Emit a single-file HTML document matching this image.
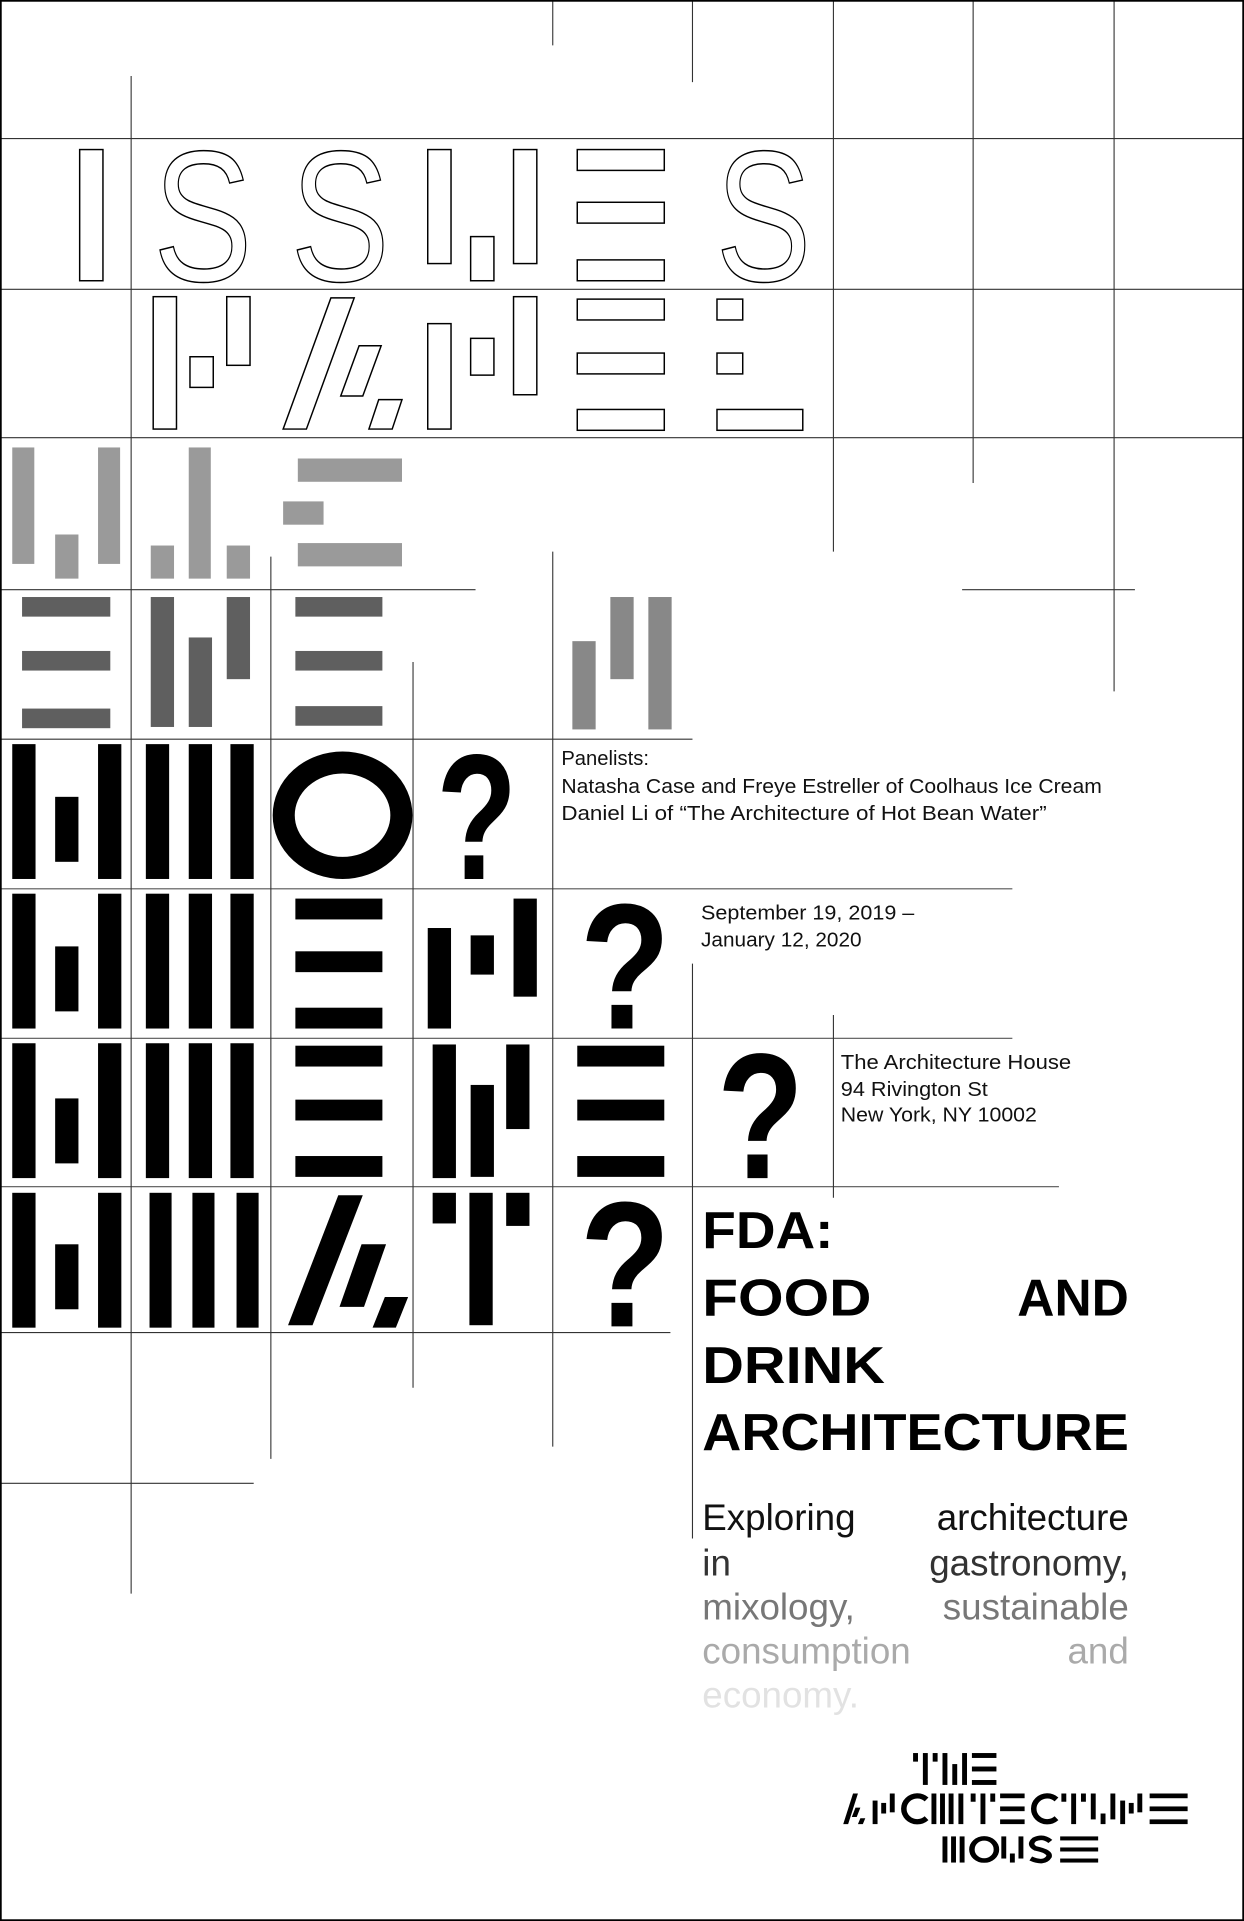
<!DOCTYPE html>
<html><head><meta charset="utf-8"><style>
html,body{margin:0;padding:0;background:#fff;}
svg{display:block;}
text{font-family:"Liberation Sans",sans-serif;}
</style></head><body>
<svg width="1244" height="1921" viewBox="0 0 1015 1567" preserveAspectRatio="none" xmlns="http://www.w3.org/2000/svg">
<rect x="0" y="0" width="1015" height="1567" fill="#fff"/>
<g stroke="#333" stroke-width="0.9" fill="none">
<line x1="0" y1="113" x2="1015" y2="113"/>
<line x1="0" y1="236" x2="1015" y2="236"/>
<line x1="0" y1="357" x2="1015" y2="357"/>
<line x1="0" y1="481" x2="388" y2="481"/>
<line x1="785" y1="481" x2="926" y2="481"/>
<line x1="0" y1="603" x2="565" y2="603"/>
<line x1="0" y1="725" x2="826" y2="725" stroke="#555"/>
<line x1="0" y1="847" x2="826" y2="847" stroke="#555"/>
<line x1="0" y1="968" x2="864" y2="968" stroke="#555"/>
<line x1="0" y1="1087" x2="547" y2="1087"/>
<line x1="0" y1="1210" x2="207" y2="1210"/>
<line x1="107" y1="62" x2="107" y2="1300"/>
<line x1="221" y1="454" x2="221" y2="1190"/>
<line x1="337" y1="540" x2="337" y2="1132"/>
<line x1="451" y1="0" x2="451" y2="37"/>
<line x1="451" y1="450" x2="451" y2="1180"/>
<line x1="565" y1="0" x2="565" y2="67"/>
<line x1="565" y1="786" x2="565" y2="1255"/>
<line x1="680" y1="0" x2="680" y2="450"/>
<line x1="680" y1="828" x2="680" y2="977"/>
<line x1="794" y1="0" x2="794" y2="394"/>
<line x1="909" y1="0" x2="909" y2="564"/>
</g>
<rect x="0.7" y="0.7" width="1013.6" height="1565.6" fill="none" stroke="#000" stroke-width="1.4"/>

<!-- Row 0 outline -->
<g fill="#fff" stroke="#000" stroke-width="1.2">
<rect x="65" y="122" width="19" height="107"/>
<rect x="349" y="122" width="19" height="93"/>
<rect x="384" y="193" width="19" height="36"/>
<rect x="419" y="122" width="19" height="93"/>
<rect x="471" y="122" width="71" height="17"/>
<rect x="471" y="165" width="71" height="17"/>
<rect x="471" y="212" width="71" height="17"/>
<text x="125" y="229" font-size="152" textLength="81" lengthAdjust="spacingAndGlyphs">S</text>
<text x="237" y="229" font-size="152" textLength="81" lengthAdjust="spacingAndGlyphs">S</text>
<text x="584" y="229" font-size="152" textLength="78" lengthAdjust="spacingAndGlyphs">S</text>
<!-- Row 1 -->
<rect x="125" y="242" width="19" height="108"/>
<rect x="155" y="291" width="19" height="25"/>
<rect x="185" y="242" width="19" height="56"/>
<polygon points="231,350 270,243 289,243 250,350"/>
<polygon points="278,323 293,282 311,282 296,323"/>
<polygon points="301,350 309,326 328,326 320,350"/>
<rect x="349" y="264" width="19" height="86"/>
<rect x="384" y="276" width="19" height="30"/>
<rect x="419" y="242" width="19" height="80"/>
<rect x="471" y="244" width="71" height="17"/>
<rect x="471" y="288" width="71" height="17"/>
<rect x="471" y="334" width="71" height="17"/>
<rect x="585" y="244" width="21" height="17"/>
<rect x="585" y="288" width="21" height="17"/>
<rect x="585" y="334" width="70" height="17"/>
</g>

<!-- Row 2 gray -->
<g fill="#9a9a9a">
<rect x="10" y="365" width="18" height="95"/>
<rect x="45" y="436" width="19" height="36"/>
<rect x="80" y="365" width="18" height="95"/>
<rect x="123" y="445" width="19" height="27"/>
<rect x="154" y="365" width="18" height="107"/>
<rect x="185" y="445" width="19" height="27"/>
<rect x="243" y="374" width="85" height="19"/>
<rect x="231" y="409" width="33" height="19"/>
<rect x="243" y="443" width="85" height="19"/>
</g>
<!-- Row 3 -->
<g fill="#5f5f5f">
<rect x="18" y="487" width="72" height="16"/>
<rect x="18" y="531" width="72" height="16"/>
<rect x="18" y="578" width="72" height="16"/>
<rect x="123" y="487" width="19" height="106"/>
<rect x="154" y="520" width="19" height="73"/>
<rect x="185" y="487" width="19" height="67"/>
<rect x="241" y="487" width="71" height="16"/>
<rect x="241" y="531" width="71" height="16"/>
<rect x="241" y="576" width="71" height="16"/>
</g>
<g fill="#888">
<rect x="467" y="523" width="19" height="72"/>
<rect x="498" y="487" width="19" height="67"/>
<rect x="529" y="487" width="19" height="108"/>
</g>

<!-- Rows 4-7 black -->
<g fill="#000">
<rect x="10" y="607" width="19" height="110"/><rect x="45" y="650" width="19" height="53"/><rect x="80" y="607" width="19" height="110"/>
<rect x="119" y="607" width="19" height="110"/><rect x="154" y="607" width="19" height="110"/><rect x="188" y="607" width="19" height="110"/>

<rect x="10" y="729" width="19" height="110"/><rect x="45" y="772" width="19" height="53"/><rect x="80" y="729" width="19" height="110"/>
<rect x="119" y="729" width="19" height="110"/><rect x="154" y="729" width="19" height="110"/><rect x="188" y="729" width="19" height="110"/>
<rect x="241" y="733" width="71" height="17"/><rect x="241" y="776" width="71" height="17"/><rect x="241" y="822" width="71" height="17"/>
<rect x="349" y="757" width="19" height="82"/><rect x="384" y="763" width="19" height="32"/><rect x="419" y="733" width="19" height="80"/>

<rect x="10" y="851" width="19" height="110"/><rect x="45" y="896" width="19" height="53"/><rect x="80" y="851" width="19" height="110"/>
<rect x="119" y="851" width="19" height="110"/><rect x="154" y="851" width="19" height="110"/><rect x="188" y="851" width="19" height="110"/>
<rect x="241" y="853" width="71" height="17"/><rect x="241" y="897" width="71" height="17"/><rect x="241" y="943" width="71" height="17"/>
<rect x="353" y="852" width="19" height="109"/><rect x="384" y="885" width="19" height="75"/><rect x="413" y="852" width="19" height="69"/>
<rect x="471" y="853" width="71" height="17"/><rect x="471" y="897" width="71" height="17"/><rect x="471" y="943" width="71" height="17"/>

<rect x="10" y="973" width="19" height="110"/><rect x="45" y="1015" width="19" height="53"/><rect x="80" y="973" width="19" height="110"/>
<rect x="122" y="973" width="18" height="110"/><rect x="157" y="973" width="18" height="110"/><rect x="193" y="973" width="18" height="110"/>
<polygon points="235,1081 276,975 296,975 255,1081"/>
<polygon points="277,1066 295,1015 315,1015 297,1066"/>
<polygon points="304,1083 314,1058 333,1058 323,1083"/>
<rect x="353" y="973" width="19" height="25"/><rect x="383" y="973" width="19" height="108"/><rect x="413" y="973" width="19" height="27"/>
</g>
<ellipse cx="279.5" cy="665" rx="48" ry="43" fill="none" stroke="#000" stroke-width="18"/>
<g font-weight="bold" fill="#000">
<text x="356" y="717" font-size="146" textLength="66" lengthAdjust="spacingAndGlyphs">?</text>
<text x="473" y="839" font-size="146" textLength="74" lengthAdjust="spacingAndGlyphs">?</text>
<text x="585" y="961" font-size="146" textLength="71" lengthAdjust="spacingAndGlyphs">?</text>
<text x="473" y="1082" font-size="146" textLength="74" lengthAdjust="spacingAndGlyphs">?</text>
</g>

<!-- info text -->
<g font-size="16.5" fill="#111">
<text x="458" y="624">Panelists:</text>
<text x="458" y="647" textLength="441" lengthAdjust="spacingAndGlyphs">Natasha Case and Freye Estreller of Coolhaus Ice Cream</text>
<text x="458" y="669" textLength="396" lengthAdjust="spacingAndGlyphs">Daniel Li of “The Architecture of Hot Bean Water”</text>
<text x="572" y="750" textLength="174" lengthAdjust="spacingAndGlyphs">September 19, 2019 –</text>
<text x="572" y="772" textLength="131" lengthAdjust="spacingAndGlyphs">January 12, 2020</text>
<text x="686" y="872" textLength="188" lengthAdjust="spacingAndGlyphs">The Architecture House</text>
<text x="686" y="894" textLength="120" lengthAdjust="spacingAndGlyphs">94 Rivington St</text>
<text x="686" y="915" textLength="160" lengthAdjust="spacingAndGlyphs">New York, NY 10002</text>
</g>
<g font-size="42" font-weight="bold" fill="#000">
<text x="573" y="1018" textLength="107" lengthAdjust="spacingAndGlyphs">FDA:</text>
<text x="573" y="1073" textLength="138" lengthAdjust="spacingAndGlyphs">FOOD</text>
<text x="921" y="1073" text-anchor="end">AND</text>
<text x="573" y="1128" textLength="149" lengthAdjust="spacingAndGlyphs">DRINK</text>
<text x="573" y="1183" textLength="348" lengthAdjust="spacingAndGlyphs">ARCHITECTURE</text>
</g>
<g font-size="30">
<text x="573" y="1248" fill="#111">Exploring</text><text x="921" y="1248" text-anchor="end" fill="#111">architecture</text>
<text x="573" y="1285" fill="#333">in</text><text x="921" y="1285" text-anchor="end" fill="#333">gastronomy,</text>
<text x="573" y="1321" fill="#777">mixology,</text><text x="921" y="1321" text-anchor="end" fill="#777">sustainable</text>
<text x="573" y="1357" fill="#aaa">consumption</text><text x="921" y="1357" text-anchor="end" fill="#aaa">and</text>
<text x="573" y="1393" fill="#e2e2e2">economy.</text>
</g>

<!-- logo -->
<g fill="#000">
<!-- THE -->
<g transform="translate(745,1430)">
<rect x="0" y="0" width="4" height="7"/><rect x="8" y="0" width="4" height="26"/><rect x="16" y="0" width="4" height="7"/>
<g transform="translate(24,0)"><rect x="0" y="0" width="4" height="26"/><rect x="8" y="9" width="4" height="17"/><rect x="16" y="0" width="4" height="26"/></g>
<g transform="translate(48,0)"><rect x="0" y="0" width="20" height="4"/><rect x="0" y="11" width="20" height="4"/><rect x="0" y="22" width="20" height="4"/></g>
</g>
<!-- ARCHITECTURE -->
<g transform="translate(688,1463) scale(1,0.96)">
<g><polygon points="0,26 8,0 12,0 4,26"/><polygon points="7,20 10,12 14,12 11,20"/><polygon points="12,26 14,21 18,21 16,26"/></g>
<g transform="translate(24,0)"><rect x="0" y="6" width="4" height="20"/><rect x="7" y="8" width="4" height="9"/><rect x="14" y="0" width="4" height="16"/></g>
<g transform="translate(46,0)"><path d="M22,5 A11,11 0 1 0 22,21" fill="none" stroke="#000" stroke-width="4.5"/></g>
<g transform="translate(72,0)"><rect x="0" y="0" width="4" height="26"/><rect x="7" y="0" width="4" height="26"/><rect x="14" y="0" width="4" height="26"/></g>
<g transform="translate(94,0)"><rect x="0" y="0" width="4" height="26"/></g>
<g transform="translate(104,0)"><rect x="0" y="0" width="4" height="7"/><rect x="8" y="0" width="4" height="26"/><rect x="16" y="0" width="4" height="7"/></g>
<g transform="translate(128,0)"><rect x="0" y="0" width="20" height="4"/><rect x="0" y="11" width="20" height="4"/><rect x="0" y="22" width="20" height="4"/></g>
<g transform="translate(152,0)"><path d="M22,5 A11,11 0 1 0 22,21" fill="none" stroke="#000" stroke-width="4.5"/></g>
<g transform="translate(178,0)"><rect x="0" y="0" width="4" height="7"/><rect x="8" y="0" width="4" height="26"/><rect x="16" y="0" width="4" height="7"/></g>
<g transform="translate(202,0)"><rect x="0" y="0" width="4" height="22"/><rect x="8" y="17" width="4" height="9"/><rect x="16" y="0" width="4" height="22"/></g>
<g transform="translate(226,0)"><rect x="0" y="6" width="4" height="20"/><rect x="7" y="8" width="4" height="9"/><rect x="14" y="0" width="4" height="16"/></g>
<g transform="translate(250,0)"><rect x="0" y="0" width="31" height="4"/><rect x="0" y="11" width="31" height="4"/><rect x="0" y="22" width="31" height="4"/></g>
</g>
<!-- HOUSE -->
<g transform="translate(769,1498) scale(1,0.82)">
<rect x="0" y="0" width="4" height="26"/><rect x="7" y="0" width="4" height="26"/><rect x="14" y="0" width="4" height="26"/>
<g transform="translate(22,0)"><ellipse cx="12" cy="13" rx="10" ry="11" fill="none" stroke="#000" stroke-width="4.5"/></g>
<g transform="translate(48,0)"><rect x="0" y="0" width="4" height="22"/><rect x="7" y="17" width="4" height="9"/><rect x="14" y="0" width="4" height="22"/></g>
<g transform="translate(70,0)"><path d="M18,5 Q12,-1 5,3 Q0,8 6,12 Q18,15 17,20 Q13,28 2,22" fill="none" stroke="#000" stroke-width="4.5"/></g>
<g transform="translate(96,0)"><rect x="0" y="0" width="31" height="4"/><rect x="0" y="11" width="31" height="4"/><rect x="0" y="22" width="31" height="4"/></g>
</g>
</g>
</svg>
</body></html>
